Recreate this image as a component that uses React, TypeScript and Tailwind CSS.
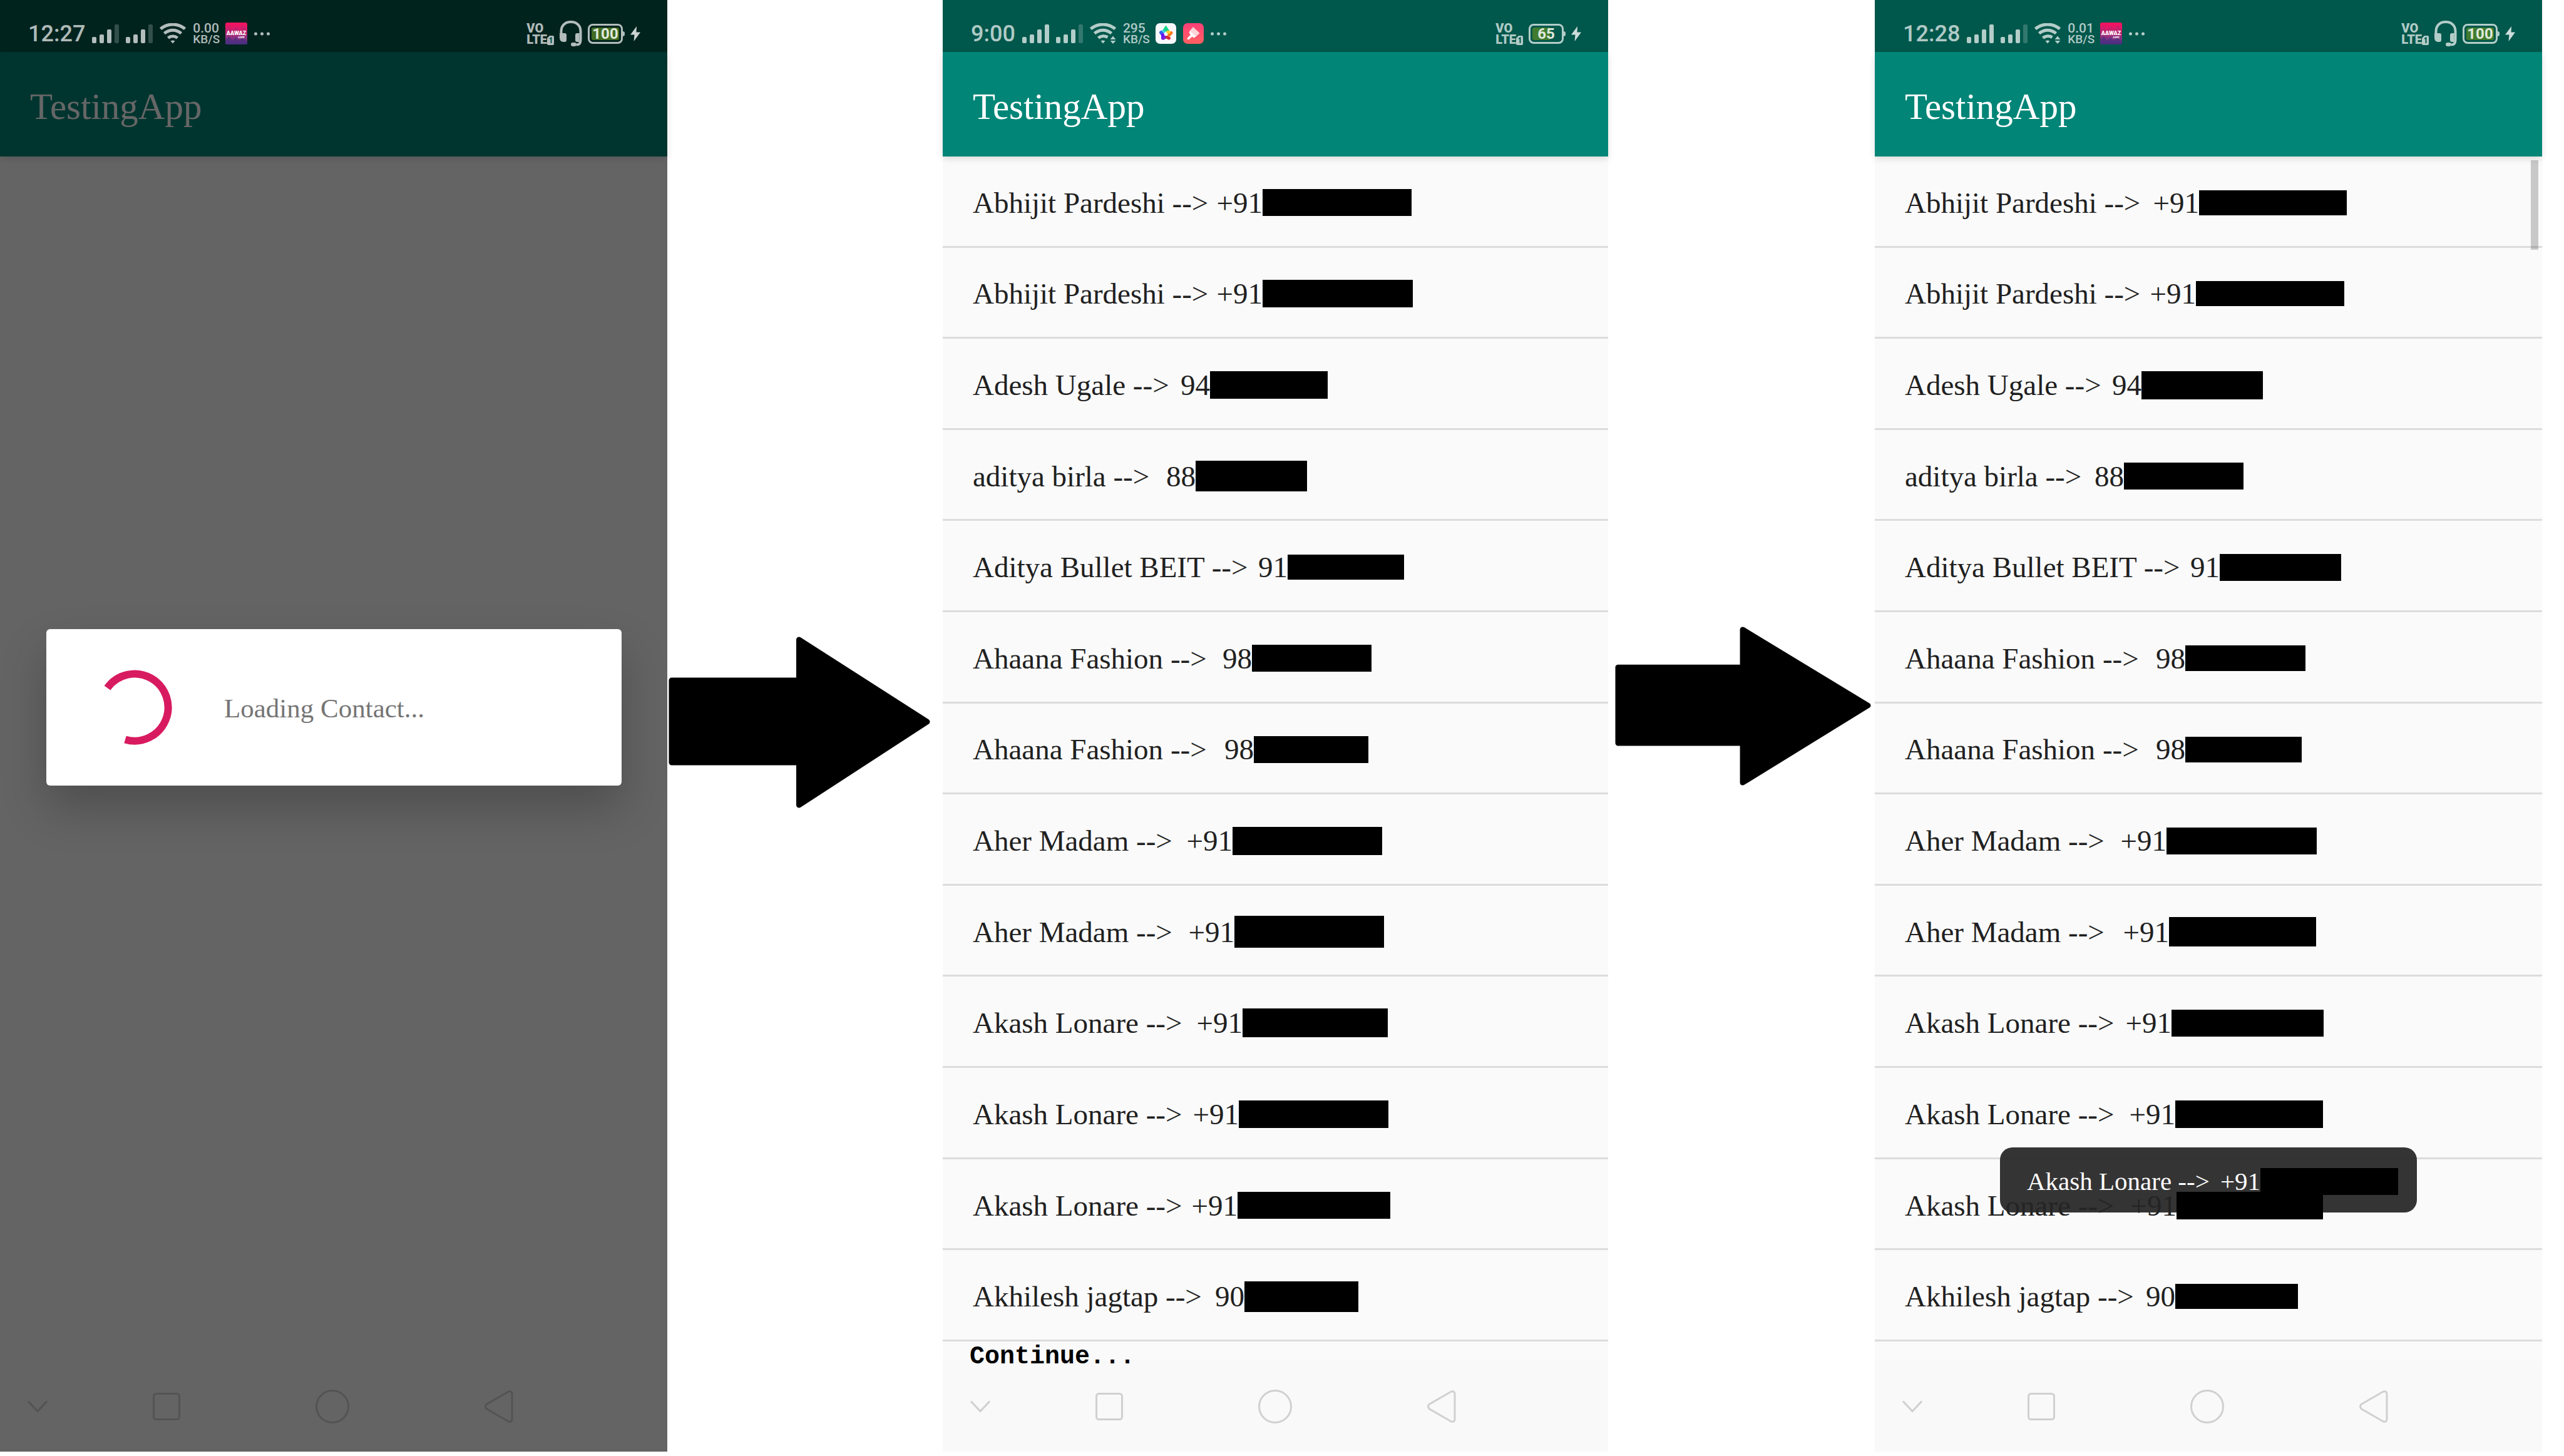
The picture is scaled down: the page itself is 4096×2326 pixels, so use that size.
import type { ReactNode } from "react";

type Contact = { name: string; prefix: string; start: number; bar: number; tall: number };

const names: [string, string][] = [
  ["Abhijit Pardeshi", "+91"],
  ["Abhijit Pardeshi", "+91"],
  ["Adesh Ugale", "94"],
  ["aditya birla", "88"],
  ["Aditya Bullet BEIT", "91"],
  ["Ahaana Fashion", "98"],
  ["Ahaana Fashion", "98"],
  ["Aher Madam", "+91"],
  ["Aher Madam", "+91"],
  ["Akash Lonare", "+91"],
  ["Akash Lonare", "+91"],
  ["Akash Lonare", "+91"],
  ["Akhilesh jagtap", "90"],
];

/* Each mask is [distance from the start of the name, width, height]. */
const masksA = [
  [463, 238, 43], [463, 240, 44], [379, 188, 44], [356, 178, 49], [503, 186, 40],
  [446, 191, 43], [449, 183, 43], [415, 239, 45], [418, 239, 51], [431, 232, 46],
  [425, 239, 44], [423, 244, 43], [434, 182, 49],
];
const masksB = [
  [470, 236, 40], [465, 237, 40], [378, 194, 45], [350, 191, 43], [503, 194, 43],
  [448, 192, 41], [448, 186, 41], [418, 240, 43], [422, 235, 47], [426, 243, 43],
  [432, 236, 44], [434, 234, 44], [432, 196, 40],
];

const build = (masks: number[][]): Contact[] =>
  names.map(([name, prefix], i) => ({
    name,
    prefix,
    start: masks[i][0],
    bar: masks[i][1],
    tall: masks[i][2],
  }));

function Signal({ full }: { full?: boolean }) {
  return (
    <svg width="43" height="30" viewBox="0 0 43 30" fill="#fff" aria-hidden="true">
      <rect x="0" y="20" width="7" height="10" rx="2" fillOpacity=".7" />
      <rect x="12" y="16" width="7" height="14" rx="2" fillOpacity=".7" />
      <rect x="24" y="8" width="7" height="22" rx="2" fillOpacity=".7" />
      <rect x="36" y="0" width="7" height="30" rx="2" fillOpacity={full ? ".7" : ".2"} />
    </svg>
  );
}

function Wifi({ traffic }: { traffic?: boolean }) {
  return (
    <svg width="42" height="33" viewBox="0 0 42 33" fill="none" stroke="#fff" strokeOpacity=".7" strokeWidth="5" aria-hidden="true">
      <path d="M1.500 9.200C13-.4 29-.4 40.500 9.200" />
      <path d="M7.500 16.400C15.500 9.600 26.500 9.600 34.500 16.400" />
      <path d={traffic ? "M13.500 23.600C18 20 24 20 28.500 22.500" : "M13.500 23.600C18 20 24 20 28.500 23.600"} />
      <path d="M17.500 28.500Q21 26.500 24.500 28.500L21 32.500Z" fill="#fff" fillOpacity=".7" stroke="none" />
      {traffic && <path d="M32.500 26L37 20.500L41.500 26ZM32.500 28L37 33L41.500 28Z" fill="#fff" fillOpacity=".7" stroke="none" />}
    </svg>
  );
}

function AawazIcon() {
  return (
    <svg width="35" height="35" viewBox="0 0 35 35" aria-hidden="true">
      <defs>
        <linearGradient id="aawaz" x1="0" y1="0" x2="0" y2="1">
          <stop offset="0" stopColor="#f5125f" />
          <stop offset=".3" stopColor="#dd1a69" />
          <stop offset=".65" stopColor="#92307f" />
          <stop offset="1" stopColor="#4a2f80" />
        </linearGradient>
      </defs>
      <rect width="35" height="35" rx="3" fill="url(#aawaz)" />
      <path d="M0 10L5 5L10 12L17 6L22 11L28 4L35 12V20H0Z" fill="#b82470" fillOpacity=".5" />
      <path d="M0 28L6 22L11 29L17 24L22 30L27 24L35 31V35H0Z" fill="#4a2f80" fillOpacity=".7" />
      <text x="17.500" y="20" textAnchor="middle" fontFamily="Roboto, sans-serif" fontWeight="900" fontSize="9" fill="#fff">AAWAZ</text>
      <text x="25" y="25" textAnchor="middle" fontFamily="Roboto, sans-serif" fontWeight="700" fontSize="5" fill="#fff">.com</text>
    </svg>
  );
}

function StarIcon() {
  return (
    <svg width="33" height="33" viewBox="0 0 33 33" strokeLinecap="round" strokeWidth="5" fill="none" aria-hidden="true">
      <rect width="33" height="33" rx="7" fill="#f8f9fd" />
      <path d="M13.500 12.500L16.500 8L19.500 12.500" stroke="#12d68a" />
      <path d="M12.500 13.500L9 14.500" stroke="#3fc9e8" />
      <path d="M8.500 15L11.500 18.500" stroke="#3a5bf0" />
      <path d="M11.500 19L11.500 24" stroke="#6a12f5" />
      <path d="M12.500 24L15 22.500" stroke="#7a22d8" />
      <path d="M18.500 22.500L21.500 24" stroke="#d8283c" />
      <path d="M21.500 19L25 15.500" stroke="#fb7a16" />
      <path d="M20 14L21 14.500" stroke="#fcc92a" />
    </svg>
  );
}

function BrushIcon() {
  return (
    <svg width="33" height="33" viewBox="0 0 33 33" aria-hidden="true">
      <defs>
        <linearGradient id="brush" x1="0" y1="0" x2="0" y2="1">
          <stop offset="0" stopColor="#ff3f78" />
          <stop offset="1" stopColor="#ff6160" />
        </linearGradient>
      </defs>
      <rect width="33" height="33" rx="7" fill="url(#brush)" />
      <path d="M16 6L26.500 16L20 22L10 13Z" fill="#ffd3d8" />
      <path d="M11 12.500L20.500 21.500L17 23.500L14.500 21.500L9 26.500L6.500 25.500L7 23.500L12 18.500L9.500 15.500Z" fill="#fff" />
    </svg>
  );
}

function Headset() {
  return (
    <svg width="36" height="41" viewBox="0 0 36 41" fill="none" stroke="#fff" strokeOpacity=".7" aria-hidden="true">
      <path d="M2.500 20V17C2.500 7.500 9 2 18 2S33.500 7.500 33.500 17V31C33.500 36 31 38.500 27 38.500" strokeWidth="4" />
      <path d="M0 20H8Q11 20 11 23V31Q11 34 8 34H6Q0 34 0 27Z" fill="#fff" fillOpacity=".7" stroke="none" />
      <path d="M31.500 20H28Q25 20 25 23V31Q25 34 28 34H31.500Z" fill="#fff" fillOpacity=".7" stroke="none" />
      <rect x="18" y="35" width="9" height="6" rx="3" fill="#fff" fillOpacity=".7" stroke="none" />
    </svg>
  );
}

function Volte() {
  return (
    <div className="flex flex-col text-[20px] leading-[18px] font-black">
      <span>VO</span>
      <span className="flex items-end">
        LTE
        <svg width="11" height="15" viewBox="0 0 11 15" aria-hidden="true">
          <path d="M4 0H9Q11 0 11 2V13Q11 15 9 15H2Q0 15 0 13V4Z" fill="#fff" fillOpacity=".7" />
          <path d="M4 5L6.500 3.500V12" fill="none" stroke="#00574b" strokeWidth="2" />
        </svg>
      </span>
    </div>
  );
}

function Battery({ level }: { level: number }) {
  return (
    <div className="flex items-center">
      <div className="relative flex h-8 w-[56px] items-center justify-center rounded-[8px] border-3 border-white/70">
        <div
          className="absolute top-[3px] bottom-[3px] left-[3px] rounded-[3px] bg-[#5e8a24]/70"
          style={{ width: Math.round(level * 0.44) }}
        />
        <span className="relative text-[24px] leading-none font-bold text-[#dfe9dc]">{level}</span>
      </div>
      <div className="h-2 w-[3px] rounded-r-sm bg-white/70" />
    </div>
  );
}

function StatusBar({ time, speed, level, full, traffic, headset, apps }: {
  time: string; speed: string; level: number; full?: boolean; traffic?: boolean; headset?: boolean; apps: ReactNode;
}) {
  return (
    <div className="h-[83px] bg-[#00574b]">
      <div className="relative z-20 flex h-full items-center justify-between pt-6 pr-[43px] pl-[45px] font-[Roboto,sans-serif] text-white/70">
        <div className="flex items-center gap-[11px]">
          <span className="text-[36px] leading-none font-medium">{time}</span>
          <Signal full={full} />
          <Signal />
          <Wifi traffic={traffic} />
          <div className="flex w-[41px] flex-col font-medium">
            <span className="text-[21px] leading-[18px]">{speed}</span>
            <span className="text-[19px] leading-[17px]">KB/S</span>
          </div>
          {apps}
          <svg width="25" height="6" viewBox="0 0 25 6" fill="#fff" fillOpacity=".7" aria-hidden="true">
            <circle cx="2.500" cy="3" r="2.500" />
            <circle cx="12.500" cy="3" r="2.500" />
            <circle cx="22.500" cy="3" r="2.500" />
          </svg>
        </div>
        <div className="flex items-center gap-[9px]">
          <Volte />
          {headset && <Headset />}
          <Battery level={level} />
          <svg width="16" height="24" viewBox="0 0 16 24" fill="#fff" fillOpacity=".8" aria-hidden="true">
            <path d="M10 0L0 13.500H6.500L5.500 24L16 9.500H9.500Z" />
          </svg>
        </div>
      </div>
    </div>
  );
}

function NavBar() {
  return (
    <nav className="flex h-36 items-center bg-[#f9f9f9] pl-11 text-[#d0d0d0]">
      <button aria-label="Hide bar" className="mr-[168px]">
        <svg width="32" height="20" viewBox="0 0 32 20" fill="none" stroke="currentColor" strokeWidth="3">
          <path d="M1 1.500L16 17.500L31 1.500" />
        </svg>
      </button>
      <button aria-label="Recent apps" className="mr-[216px]">
        <svg width="44" height="44" viewBox="0 0 44 44" fill="none" stroke="currentColor" strokeWidth="3">
          <rect x="1.500" y="1.500" width="41" height="41" rx="4" />
        </svg>
      </button>
      <button aria-label="Home" className="mr-[216px]">
        <svg width="54" height="54" viewBox="0 0 54 54" fill="none" stroke="currentColor" strokeWidth="3">
          <circle cx="27" cy="27" r="25.500" />
        </svg>
      </button>
      <button aria-label="Back">
        <svg width="46" height="52" viewBox="0 0 46 52" fill="none" stroke="currentColor" strokeWidth="3">
          <path d="M3 22.500L37.500 2.500Q44 0 44 6.500V45.500Q44 52 37.500 49.500L3 29.500Q0 26 3 22.500Z" />
        </svg>
      </button>
    </nav>
  );
}

function Line({ c }: { c: Contact }) {
  return (
    <>
      <span className="flex shrink-0 justify-between whitespace-nowrap" style={{ width: c.start }}>
        <span>{c.name} --&gt;</span>
        <span>{c.prefix}</span>
      </span>
      <span className="relative z-20 bg-black" style={{ width: c.bar, height: c.tall }} />
    </>
  );
}

function ContactList({ contacts }: { contacts: Contact[] }) {
  return (
    <ul className="flex flex-1 flex-col text-[47px] leading-[56px] text-[#202020]">
      {contacts.map((c, i) => (
        <li key={i} className="flex flex-1 items-center border-b-3 border-[#dcdcdc] pt-[5px] pl-12">
          <Line c={c} />
        </li>
      ))}
    </ul>
  );
}

function Phone({ status, note, overlay, children }: {
  status: ReactNode; note?: string; overlay?: ReactNode; children?: ReactNode;
}) {
  return (
    <section className="relative flex flex-col bg-[#fafafa]">
      {status}
      <header className="relative flex h-[167px] items-center bg-[#008577] pt-2 pl-12 shadow-[0_4px_10px_rgba(0,0,0,0.12)]">
        <h1 className="text-[59px] leading-none text-white">TestingApp</h1>
      </header>
      <div className="flex flex-1 flex-col">{children}</div>
      <div className="h-8 pl-[43px]">
        {note && (
          <p className="relative font-['Liberation_Mono',monospace] text-[40px] leading-[50px] font-bold text-black">{note}</p>
        )}
      </div>
      <NavBar />
      {overlay}
    </section>
  );
}

function Arrow({ className }: { className: string }) {
  return (
    <div className={className}>
      <svg viewBox="0 0 417 274" preserveAspectRatio="none" className="h-full w-full" aria-hidden="true">
        <path
          d="M5 70H208V5L412 136L208 269V201H5Z"
          fill="#000"
          stroke="#000"
          strokeWidth="9"
          strokeLinejoin="round"
        />
      </svg>
    </div>
  );
}

export default function App() {
  return (
    <main className="grid min-h-screen grid-cols-[1066fr_440fr_1063fr_426fr_1066fr_35fr] bg-white pb-[7px] font-['Liberation_Serif',serif]">
      <Phone
        status={<StatusBar time="12:27" speed="0.00" level={100} headset apps={<AawazIcon />} />}
        overlay={
          <>
            <div className="absolute inset-0 z-10 bg-black/60" />
            <div
              role="dialog"
              aria-label="Loading"
              className="absolute top-[1005px] right-[73px] left-[74px] z-20 flex h-[250px] items-center gap-[83px] rounded-[6px] bg-white pl-[81px] shadow-[0_36px_72px_rgba(0,0,0,0.22)]"
            >
              <svg width="120" height="120" viewBox="0 0 120 120" fill="none" stroke="#d81b60" strokeWidth="12" aria-hidden="true">
                <path d="M16.500 29A53.500 53.500 0 1 1 45 111.400" />
              </svg>
              <p className="pt-[3px] text-[43px] leading-none text-[#757575]">Loading Contact...</p>
            </div>
          </>
        }
      />
      <Arrow className="mt-[1017px] mr-5 ml-[2px] h-[274px]" />
      <Phone
        note="Continue..."
        status={
          <StatusBar time="9:00" speed="295" level={65} full traffic apps={<><StarIcon /><BrushIcon /></>} />
        }
      >
        <ContactList contacts={build(masksA)} />
      </Phone>
      <Arrow className="mt-[1001px] mr-[6px] ml-[11px] h-[254px]" />
      <Phone
        status={<StatusBar time="12:28" speed="0.01" level={100} full traffic headset apps={<AawazIcon />} />}
        overlay={
          <>
            <div className="absolute top-[256px] right-[6px] h-[143px] w-3 bg-black/20" />
            <div
              role="status"
              className="absolute right-[200px] bottom-[382px] left-[200px] z-10 flex h-[104px] items-center rounded-[20px] bg-[#252525]/93 pt-1 pl-[43px] text-[41px] leading-none text-white"
            >
              <Line c={{ name: "Akash Lonare", prefix: "+91", start: 373, bar: 220, tall: 43 }} />
            </div>
          </>
        }
      >
        <ContactList contacts={build(masksB)} />
      </Phone>
    </main>
  );
}
